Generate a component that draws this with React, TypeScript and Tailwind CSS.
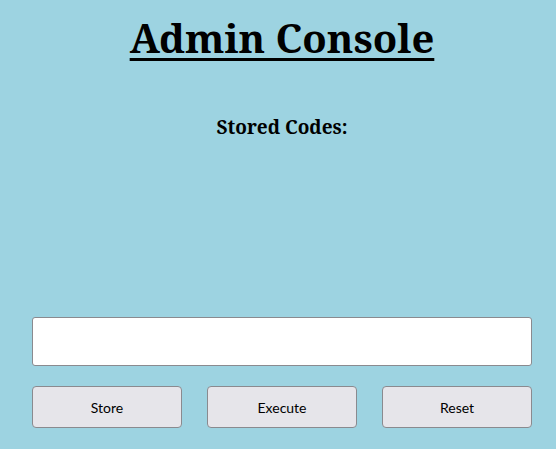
import { useState } from 'react'

export default function App() {
  const [code, setCode] = useState('')
  const [codes, setCodes] = useState<string[]>([])

  return (
    <div className="min-h-screen w-full bg-[#9dd3e1] pl-8 pr-6 pt-[10px]">
      <h1 className="text-center font-['Noto_Serif','DejaVu_Serif',serif] text-[40px] font-bold leading-[56px] text-black underline decoration-[3px] underline-offset-[5px]">
        Admin Console
      </h1>
      <h2 className="mt-[49px] text-center font-['Noto_Serif','DejaVu_Serif',serif] text-[19px] font-bold leading-6 text-black">
        Stored Codes:
      </h2>
      <div className="h-[178px] overflow-auto text-center font-['Noto_Serif','DejaVu_Serif',serif] text-sm">
        {codes.map((c, i) => (
          <div key={i}>{c}</div>
        ))}
      </div>
      <input
        value={code}
        onChange={(e) => setCode(e.target.value)}
        className="block h-[49px] w-full rounded-[3px] border border-[#8a8a8f] bg-white px-2 font-['Lato',sans-serif] text-base outline-none"
      />
      <div className="mt-[20px] grid grid-cols-3 gap-[25px]">
        <button
          onClick={() => { if (code) { setCodes([...codes, code]); setCode('') } }}
          className="h-[42px] rounded-[4px] border border-[#8a8a8f] bg-[#e6e5ea] font-['Lato',sans-serif] text-[14px] text-black"
        >
          Store
        </button>
        <button className="h-[42px] rounded-[4px] border border-[#8a8a8f] bg-[#e6e5ea] font-['Lato',sans-serif] text-[14px] text-black">
          Execute
        </button>
        <button
          onClick={() => { setCodes([]); setCode('') }}
          className="h-[42px] rounded-[4px] border border-[#8a8a8f] bg-[#e6e5ea] font-['Lato',sans-serif] text-[14px] text-black"
        >
          Reset
        </button>
      </div>
    </div>
  )
}
